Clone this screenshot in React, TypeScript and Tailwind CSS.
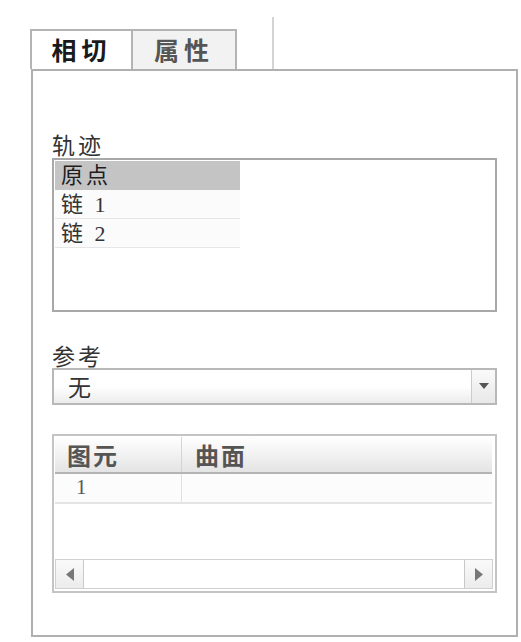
import React from 'react';

const ROWS = ['原点', '链 1', '链 2'];

export default function App() {
  return (
    <div className="w-[521px] h-[642px] bg-white relative overflow-hidden font-['Noto_Sans_CJK_SC','Liberation_Serif',sans-serif] text-[#222]">
      {/* Tab strip */}
      <div className="flex items-end h-[69px] pl-[30px]">
        <div className="h-[40px] w-[103px] flex items-center justify-center border-l-2 border-t-2 border-r-2 border-[#b4b4b4] bg-white text-[25px] font-bold tracking-[5px] text-[#1a1a1a]">
          相切
        </div>
        <div className="h-[40px] w-[104px] flex items-center justify-center border-t-2 border-r-2 border-[#b4b4b4] bg-[#f2f2f2] text-[25px] font-bold tracking-[5px] text-[#555]">
          属性
        </div>
        <div className="ml-[35px] h-[52px] w-[2px] bg-[#d4d4d4]" />
      </div>

      {/* Panel */}
      <div className="ml-[31px] w-[487px] h-[568px] border-2 border-[#b0b0b0] px-[19px] pt-[59px]">
        <div className="text-[23px] leading-[28px] tracking-[3px] text-[#333]">轨迹</div>
        <div className="h-[154px] border-2 border-[#a8a8a8] p-[1px] font-['Liberation_Serif','Noto_Sans_CJK_SC',serif]">
          {ROWS.map((r, i) => (
            <div
              key={r}
              className={`w-[185px] h-[29px] flex items-center pl-[6px] text-[22px] tracking-[3px] ${
                i === 0 ? 'bg-[#c4c4c4] text-[#1e1e1e]' : 'bg-[#fbfbfb] border-b border-[#e6e6e6] text-[#333]'
              }`}
            >
              {r}
            </div>
          ))}
        </div>

        <div className="mt-[31px] text-[23px] leading-[25px] tracking-[3px] text-[#333]">参考</div>
        <div className="h-[37px] flex border-2 border-[#b8b8b8] bg-gradient-to-b from-white via-white to-[#ececec]">
          <div className="flex-1 flex items-center pl-[14px] text-[23px] text-[#333]">无</div>
          <div className="w-[24px] flex items-center justify-center border-l border-[#cccccc] bg-gradient-to-b from-[#fafafa] to-[#e8e8e8]">
            <svg width="10" height="7" viewBox="0 0 10 7">
              <path d="M0 0 H10 L5 6 Z" fill="#555" />
            </svg>
          </div>
        </div>

        {/* Table */}
        <div className="mt-[29px] h-[159px] border-2 border-[#c4c4c4] p-[1px] flex flex-col">
          <div className="h-[37px] flex bg-gradient-to-b from-white to-[#e4e4e4] border-b-2 border-[#b4b4b4] mr-[2px]">
            <div className="w-[127px] flex items-center pl-[12px] text-[24px] font-bold tracking-[2px] text-[#555] border-r border-[#d4d4d4]">
              图元
            </div>
            <div className="flex-1 flex items-center pl-[13px] text-[24px] font-bold tracking-[2px] text-[#555]">
              曲面
            </div>
          </div>
          <div className="h-[30px] flex border-b-2 border-[#e4e4e4] bg-[#fcfcfc] mr-[2px]">
            <div className="w-[127px] flex items-center pl-[21px] text-[21px] font-['Liberation_Serif',serif] text-[#555] border-r border-[#e0e0e0]">
              1
            </div>
            <div className="flex-1" />
          </div>
          <div className="flex-1" />
          {/* Horizontal scrollbar */}
          <div className="h-[30px] flex border border-[#d0d0d0] bg-white mb-[1px] mr-[1px]">
            <div className="w-[28px] flex items-center justify-center border-r border-[#c8c8c8] bg-gradient-to-b from-[#fafafa] to-[#ececec]">
              <svg width="8" height="13" viewBox="0 0 8 13">
                <path d="M8 0 V13 L0 6.5 Z" fill="#777" />
              </svg>
            </div>
            <div className="flex-1" />
            <div className="w-[28px] flex items-center justify-center border-l border-[#c8c8c8] bg-gradient-to-b from-[#fafafa] to-[#ececec]">
              <svg width="8" height="13" viewBox="0 0 8 13">
                <path d="M0 0 V13 L8 6.5 Z" fill="#777" />
              </svg>
            </div>
          </div>
        </div>
      </div>
    </div>
  );
}
